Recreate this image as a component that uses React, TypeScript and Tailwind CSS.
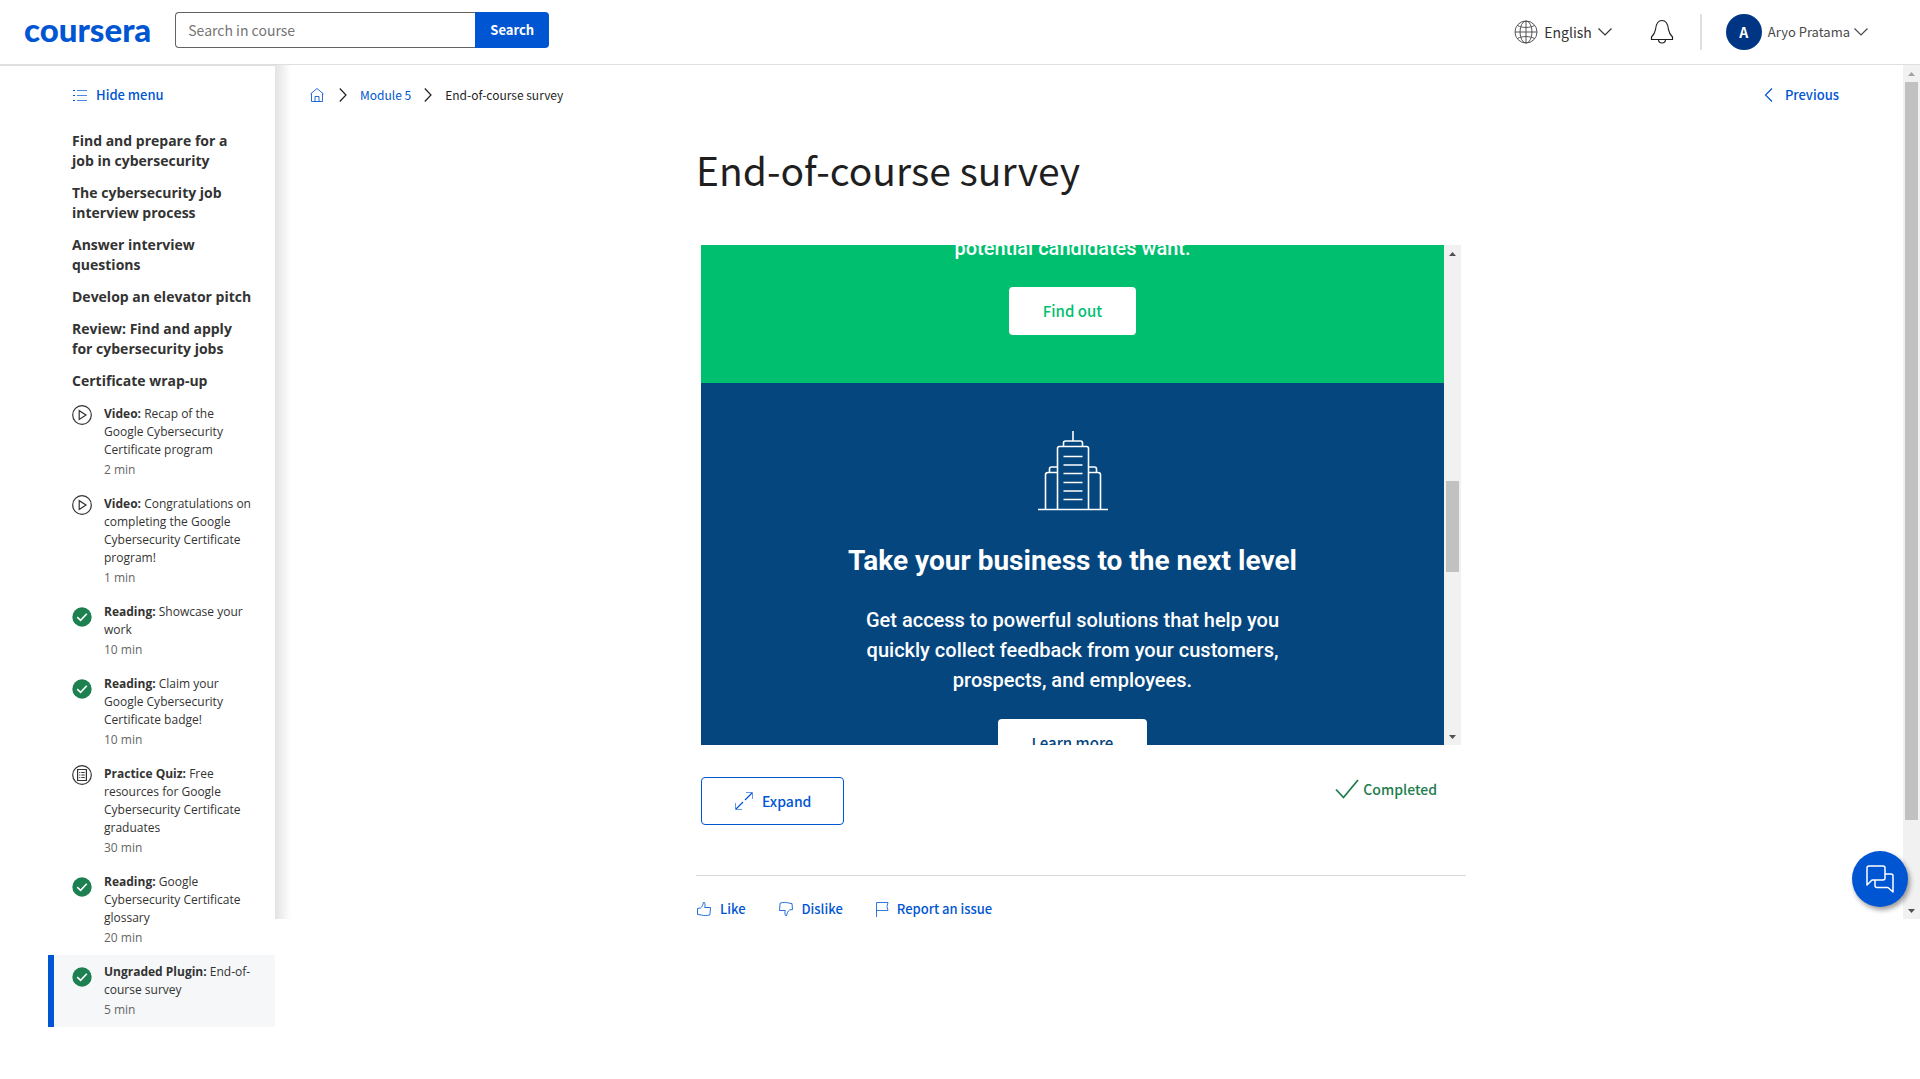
import type { ReactNode } from "react";

type Kind = "video" | "quiz" | "done";

const sections = [
  "Find and prepare for a job in cybersecurity",
  "The cybersecurity job interview process",
  "Answer interview questions",
  "Develop an elevator pitch",
  "Review: Find and apply for cybersecurity jobs",
  "Certificate wrap-up",
];

const items: { kind: Kind; type: string; title: string; time: string; active?: boolean }[] = [
  { kind: "video", type: "Video:", title: "Recap of the Google Cybersecurity Certificate program", time: "2 min" },
  { kind: "video", type: "Video:", title: "Congratulations on completing the Google Cybersecurity Certificate program!", time: "1 min" },
  { kind: "done", type: "Reading:", title: "Showcase your work", time: "10 min" },
  { kind: "done", type: "Reading:", title: "Claim your Google Cybersecurity Certificate badge!", time: "10 min" },
  { kind: "quiz", type: "Practice Quiz:", title: "Free resources for Google Cybersecurity Certificate graduates", time: "30 min" },
  { kind: "done", type: "Reading:", title: "Google Cybersecurity Certificate glossary", time: "20 min" },
  { kind: "done", type: "Ungraded Plugin:", title: "End-of-course survey", time: "5 min", active: true },
];

function Svg({ w, h, className = "", children }: { w: number; h: number; className?: string; children: ReactNode }) {
  return (
    <svg width={w} height={h} viewBox={`0 0 ${w} ${h}`} fill="none" stroke="currentColor" className={`shrink-0 ${className}`} aria-hidden="true">
      {children}
    </svg>
  );
}

function ChevronDown() {
  return (
    <Svg w={14} h={8}>
      <path d="M0.5 0.5 7 7 13.5 0.5" strokeWidth="1.2" />
    </Svg>
  );
}

function ChevronRight() {
  return (
    <Svg w={8} h={14}>
      <path d="M0.8 0.5 7 7 0.8 13.5" strokeWidth="1.2" />
    </Svg>
  );
}

function ItemIcon({ kind }: { kind: Kind }) {
  if (kind === "done") {
    return (
      <Svg w={20} h={20} className="mt-1">
        <circle cx="10" cy="10" r="9.7" fill="#1d8050" stroke="none" />
        <path d="M5.2 10.2 8.6 13.4 14.8 6.8" stroke="#fff" strokeWidth="1.6" />
      </Svg>
    );
  }
  return (
    <Svg w={20} h={20} className="text-[#333]">
      <circle cx="10" cy="10" r="9.3" strokeWidth="1.2" />
      {kind === "video" ? (
        <path d="M7.2 5.7v8.8L14 10.1z" strokeWidth="1.2" />
      ) : (
        <g>
          <path d="M5.6 4.5h8.8v11H5.6z" strokeWidth="1.2" />
          <path d="M7.3 7.5h1M7.3 10h1M7.3 12.5h1M9.3 7.5h3.4M9.3 10h3.4M9.3 12.5h3.4" strokeWidth="1" />
        </g>
      )}
    </Svg>
  );
}

function ScrollArrow({ up = false, className = "" }: { up?: boolean; className?: string }) {
  return (
    <div className={`flex h-[17px] shrink-0 items-center justify-center ${className}`}>
      <svg width="7" height="4" viewBox="0 0 7 4" fill="currentColor" aria-hidden="true">
        <path d={up ? "M3.5 0 7 4H0z" : "M0 0h7L3.5 4z"} />
      </svg>
    </div>
  );
}

function Header() {
  return (
    <header className="flex h-[65px] items-center border-b border-[#dfdfdf] pr-[52px] pl-6">
      <a href="#" className="mb-1.5 font-['Lato',sans-serif] text-[33px] leading-9 font-black text-[#0056d2]">
        coursera
      </a>
      <form className="mb-1 ml-6 flex h-9 w-[374px]">
        <input
          type="text"
          aria-label="Search in course"
          placeholder="Search in course"
          className="min-w-0 flex-1 rounded-l border border-r-0 border-[#636363] px-3 text-sm text-[#1f1f1f] placeholder:text-[#757575] focus:outline-none"
        />
        <button type="button" className="w-[74px] rounded-r bg-[#0056d2] text-[13px] font-bold text-white">
          Search
        </button>
      </form>
      <button type="button" className="ml-auto flex items-center gap-1.5 text-sm text-[#333]">
        <Svg w={24} h={24} className="text-[#555]">
          <circle cx="12" cy="12" r="11" />
          <ellipse cx="12" cy="12" rx="6" ry="11" />
          <path d="M12 1v22M1 12h22M3.5 5.5c4.5 2.6 12.5 2.6 17 0M3.5 18.5c4.5-2.6 12.5-2.6 17 0" />
        </Svg>
        English
        <ChevronDown />
      </button>
      <button type="button" aria-label="Notifications" className="ml-[38px] text-[#1f1f1f]">
        <Svg w={24} h={26}>
          <path d="M1.5 20.5v-2.5c2-2 3.5-4 4-7.5C6 5.5 7 1.5 12 1.5s6 4 6.5 9c.5 3.5 2 5.5 4 7.5v2.5z" strokeWidth="1.2" />
          <path d="M8.5 20.5c0 2 1.5 3.5 3.5 3.5s3.5-1.5 3.5-3.5" strokeWidth="1.2" />
        </Svg>
      </button>
      <div className="ml-[26px] h-9 w-0.5 bg-[#dfdfdf]" />
      <button type="button" className="ml-6 flex items-center text-[13px] text-[#4a4a4a]">
        <span className="flex size-9 items-center justify-center rounded-full bg-[#003583] text-sm font-bold text-white">A</span>
        <span className="mr-1 ml-1.5">Aryo Pratama</span>
        <ChevronDown />
      </button>
    </header>
  );
}

function Sidebar() {
  return (
    <aside className="w-[275px] shrink-0 pt-5 font-['Open_Sans',sans-serif] text-[#333] shadow-[inset_0_1px_0_#dfdfdf]">
      <button type="button" className="ml-[72px] flex items-center gap-2 font-['Noto_Sans_CJK_SC',sans-serif] text-[13px] leading-5 font-medium text-[#0056d2]">
        <Svg w={16} h={12}>
          <path d="M1 1.5h2M1 6.5h2M1 11.5h2" strokeWidth="1" />
          <path d="M5 1.5h10M5 6.5h10M5 11.5h10" strokeWidth="1" opacity="0.7" />
        </Svg>
        Hide menu
      </button>
      <div className="mt-[26px] flex flex-col gap-3 pr-[23px] pl-[72px] text-sm leading-5 font-bold">
        {sections.map((s) => (
          <a key={s} href="#">
            {s}
          </a>
        ))}
      </div>
      <ul className="mt-1.5 ml-12">
        {items.map((it) => (
          <li key={it.title}>
            <a
              href="#"
              className={
                it.active
                  ? "flex gap-3 border-l-6 border-[#0056d2] bg-[#f5f7f8] py-2 pr-5 pl-[18px]"
                  : "flex gap-3 border-l-6 border-transparent py-2 pr-5 pl-[18px]"
              }
            >
              <ItemIcon kind={it.kind} />
              <div className="text-xs leading-[18px]">
                <p>
                  <b>{it.type}</b> {it.title}
                </p>
                <p className="mt-0.5 text-[#666]">{it.time}</p>
              </div>
            </a>
          </li>
        ))}
      </ul>
    </aside>
  );
}

function Survey() {
  return (
    <div className="mx-[5px] mt-[52px] flex h-[500px] overflow-hidden">
      <div className="min-w-0 flex-1 overflow-hidden text-center text-white">
        <section className="-mt-3 flex flex-col items-center bg-[#00bf6f] pb-12">
          <p className="font-['Roboto',sans-serif] text-xl leading-[30px] font-medium">potential candidates want.</p>
          <button type="button" className="mt-6 h-12 rounded bg-white px-[34px] text-[15px] font-medium text-[#00bf6f]">
            Find out
          </button>
        </section>
        <section className="flex flex-col items-center bg-[#05467e] pt-12 pb-12">
          <Svg w={70} h={80}>
            <g strokeWidth="1.6">
              <path d="M0 78.5h70M35 0v10M25.5 15v-3a2 2 0 0 1 2-2h15a2 2 0 0 1 2 2v3" />
              <path d="M19.5 78V17.5a2 2 0 0 1 2-2h27a2 2 0 0 1 2 2V78" />
              <path d="M7.5 78V44a2.5 2.5 0 0 1 2.5-2.5h9.5M11.5 41.5V38a2 2 0 0 1 2-2h6" />
              <path d="M62.5 78V44a2.5 2.5 0 0 0-2.5-2.5h-9.5M58.5 41.5V38a2 2 0 0 0-2-2h-6" />
              <path d="M25.5 25.5h19M25.5 34h19M25.5 42.5h19M25.5 51.5h19M25.5 60h19M25.5 68.5h19" />
            </g>
          </Svg>
          <h2 className="mt-8 font-['Roboto',sans-serif] text-[28px] leading-9 font-bold">Take your business to the next level</h2>
          <p className="mt-[26px] max-w-[440px] font-['Roboto',sans-serif] text-xl leading-[30px] font-medium">
            Get access to powerful solutions that help you quickly collect feedback from your customers, prospects, and employees.
          </p>
          <button type="button" className="mt-6 h-12 shrink-0 rounded bg-white px-[34px] text-[15px] font-medium text-[#05467e]">
            Learn more
          </button>
        </section>
      </div>
      <div className="flex w-[17px] shrink-0 flex-col bg-[#f1f1f1] px-0.5 text-[#505050]">
        <ScrollArrow up />
        <div className="mt-[219px] h-[91px] bg-[#c1c1c1]" />
        <ScrollArrow className="mt-auto" />
      </div>
    </div>
  );
}

function Feedback() {
  return (
    <div className="mt-[23px] flex gap-8 text-[13px] leading-5 font-medium text-[#0056d2]">
      <button type="button" className="flex items-center gap-2">
        <Svg w={16} h={16}>
          <path d="M1.5 7.5 4.5 7C6.3 5.6 7 4 7.3 1.5h1.2c.8 1.5.7 3.2.2 5h5.8l-.6 7.3c-2.8 1-6 1-8.4.2L1.5 13.5z" opacity="0.85" />
        </Svg>
        Like
      </button>
      <button type="button" className="flex items-center gap-2">
        <Svg w={16} h={16}>
          <path d="M14.5 8.5 11.5 9c-1.800 1.400-2.500 3-2.800 5.500H7.500c-.8-1.500-.7-3.200-.2-5H1.500l.6-7.300c2.800-1 6-1 8.400-.2l3.500.5z" opacity="0.85" />
        </Svg>
        Dislike
      </button>
      <button type="button" className="flex items-center gap-2">
        <Svg w={14} h={16}>
          <path d="M1.5 16V1.5h11.5l-1 4 1 4H1.5" opacity="0.8" />
        </Svg>
        Report an issue
      </button>
    </div>
  );
}

function Content() {
  return (
    <div className="relative flex min-w-0 flex-1">
      <div className="w-4 shrink-0 bg-linear-to-r from-[#e3e3e3] to-white" />
      <main className="min-w-0 flex-1">
        <div className="flex items-center justify-between pt-5 pr-16 pl-[19px] leading-5">
          <nav aria-label="Breadcrumb" className="flex items-center gap-[13px] text-xs text-[#1f1f1f]">
            <a href="#" aria-label="Home" className="mr-0.5 text-[#0056d2]">
              <Svg w={14} h={16}>
                <path d="M0.5 7 7 1.5 13.5 7M1.5 6.5v8h11v-8M5 14.5v-5h4v5" opacity="0.85" />
              </Svg>
            </a>
            <ChevronRight />
            <a href="#" className="text-[#0056d2]">
              Module 5
            </a>
            <ChevronRight />
            <span>End-of-course survey</span>
          </nav>
          <a href="#" className="flex items-center gap-3 text-[13px] font-medium text-[#0056d2]">
            <Svg w={9} h={14}>
              <path d="M8 0.5 1.5 7 8 13.5" strokeWidth="1.2" />
            </Svg>
            Previous
          </a>
        </div>
        <div className="pr-8">
          <div className="mx-auto max-w-[770px]">
            <h1 className="mt-10 text-[39px] leading-12 text-[#1f1f1f]">End-of-course survey</h1>
            <Survey />
            <div className="mx-[5px] mt-8 flex items-start justify-between">
              <button type="button" className="flex h-12 items-center gap-2 rounded border border-[#0056d2] px-8 text-sm font-medium text-[#0056d2]">
                <Svg w={20} h={20}>
                  <path d="M2 18 9 11M11 9 18 2" strokeWidth="1.2" />
                  <path d="M12 1.5h6.5V8M1.5 12v6.5H8" opacity="0.6" />
                </Svg>
                Expand
              </button>
              <p className="mr-6 flex items-center gap-1 text-sm leading-6 font-medium text-[#1d7c4d]">
                <Svg w={24} h={20}>
                  <path d="M1 10.5 8.5 18.5 23 1" strokeWidth="1.8" />
                </Svg>
                Completed
              </p>
            </div>
            <hr className="mt-[50px] border-[#d9d9d9]" />
            <Feedback />
          </div>
        </div>
      </main>
      <div className="flex w-[17px] shrink-0 flex-col bg-[#f1f1f1] px-0.5 text-[#505050]">
        <ScrollArrow up className="text-[#a3a3a3]" />
        <div className="h-[738px] bg-[#c1c1c1]" />
        <ScrollArrow className="mt-auto" />
      </div>
      <button
        type="button"
        aria-label="Chat with us"
        className="absolute right-3 bottom-3 flex size-14 items-center justify-center rounded-full bg-[#0056d2] text-white shadow-[2px_3px_5px_rgba(0,0,0,0.4)]"
      >
        <Svg w={28} h={28}>
          <path
            d="M3 1h14a2 2 0 0 1 2 2v10a2 2 0 0 1-2 2H6l-5 5V3a2 2 0 0 1 2-2zM19 9h6a2 2 0 0 1 2 2v16l-5-4.5H11a2 2 0 0 1-2-2V15"
            strokeWidth="1.5"
            strokeLinejoin="round"
          />
        </Svg>
      </button>
    </div>
  );
}

export default function App() {
  return (
    <div className="min-h-screen bg-white font-['Noto_Sans_CJK_SC',sans-serif]">
      <Header />
      <div className="flex items-start">
        <Sidebar />
        <Content />
      </div>
    </div>
  );
}
